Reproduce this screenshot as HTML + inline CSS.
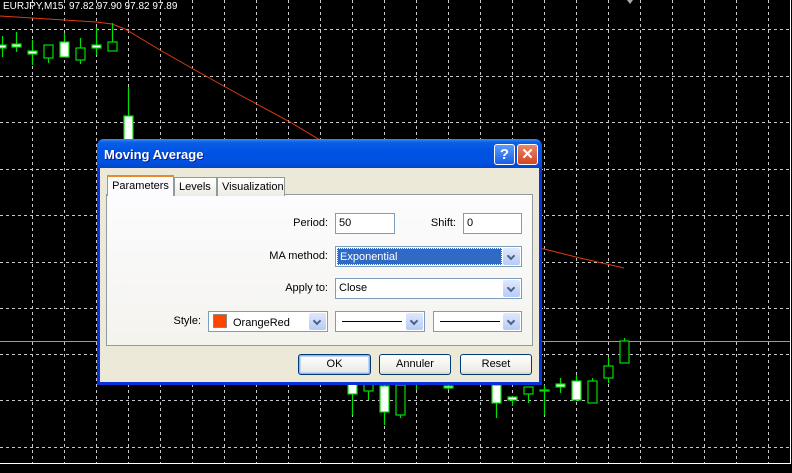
<!DOCTYPE html>
<html><head><meta charset="utf-8"><style>
body{margin:0;width:792px;height:473px;background:#000;overflow:hidden;position:relative;font-family:"Liberation Sans",Tahoma,sans-serif;font-size:11px}
.a{position:absolute}
#dlg{left:97px;top:139px;width:445px;height:246px;background:#0831d9;border-radius:7px 7px 0 0}
#tb{left:0;top:0;width:445px;height:29px;border-radius:7px 7px 0 0;background:linear-gradient(#3c8cf7 0%,#0a5ee6 12%,#0054e3 40%,#0150e0 80%,#0146c8 100%)}
#body{left:3px;top:29px;width:439px;height:214px;background:#ece9d8}
.lbl{position:absolute;text-align:right;color:#000}
.inp{position:absolute;background:#fff;border:1px solid #7f9db9;box-sizing:border-box;height:21px;padding:2px 3px;line-height:15px}
.dd{position:absolute;right:1px;top:1px;width:17px;height:17px;background:linear-gradient(#dfe9fd,#b6cbf6);border-radius:2px}
.dd:after{content:"";position:absolute;left:5px;top:5px;width:4px;height:4px;border-right:2px solid #4d6185;border-bottom:2px solid #4d6185;transform:rotate(45deg)}
.btn{position:absolute;height:21px;box-sizing:border-box;border:1px solid #003c74;border-radius:3px;background:linear-gradient(#fff,#ecebe6 85%,#d6d0c5);text-align:center;line-height:19px}
.tab{position:absolute;height:19px;border:1px solid #919b9c;border-bottom:none;background:linear-gradient(#fff,#ecebe5);line-height:18px;padding:0 4px;box-sizing:border-box}
</style></head><body>
<svg class="a" style="left:0;top:0" width="792" height="473">
<g stroke="#c8c8c8" stroke-width="1" stroke-dasharray="3,3">
<path d="M32.5 0V463M64.5 0V463M96.5 0V463M128.5 0V463M160.5 0V463M192.5 0V463M224.5 0V463M256.5 0V463M288.5 0V463M320.5 0V463M352.5 0V463M384.5 0V463M416.5 0V463M448.5 0V463M480.5 0V463M512.5 0V463M544.5 0V463M576.5 0V463M608.5 0V463M640.5 0V463M672.5 0V463M704.5 0V463M736.5 0V463M768.5 0V463"/>
<path d="M0 29.5H790M0 76.5H790M0 122.5H790M0 169.5H790M0 215.5H790M0 262.5H790M0 308.5H790M0 354.5H790M0 400.5H790M0 447.5H790"/>
</g>
<path d="M0 341.5H790" stroke="#9a9a9a"/>
<path d="M0 463.5H790.5V0" stroke="#fff" fill="none"/>
<path d="M0 16 L32 18 L64 20 L96 22 L112 24 L125 29 L160 50 L195 70 L240 95 L290 122 L320 140 L540 248 L580 258 L624 268" stroke="#e03a10" fill="none"/>
<g stroke="#00e000" stroke-width="1.2">
<path d="M2.5 36V57M16.5 32V52M32.5 40V65M48.5 45V63M64.5 33V42M80.5 38V64M96.5 27V55M112.5 23V42M128.5 87V140M352.5 380V415M368.5 384V400M384.5 380V425M400.5 380V418M416.5 384V390M448.5 384V390M496.5 384V418M512.5 397V406M528.5 387V403M544.5 385V415M560.5 378V393M576.5 375V400M592.5 378V403M608.5 357V383M624.5 338V363"/>
</g>
<g stroke="#00e000" stroke-width="1.2" fill="#fff">
<rect x="-1" y="45" width="7" height="3"/><rect x="12" y="44" width="9" height="3"/><rect x="28" y="51" width="9" height="3"/>
<rect x="44" y="45" width="9" height="13" fill="#000"/><rect x="60" y="42" width="9" height="15"/><rect x="76" y="48" width="9" height="12" fill="#000"/>
<rect x="92" y="45" width="9" height="3"/><rect x="108" y="42" width="9" height="9" fill="#000"/><rect x="124" y="116" width="9" height="24"/>
<rect x="348" y="384" width="9" height="10"/><rect x="364" y="384" width="9" height="7" fill="#000"/><rect x="380" y="386" width="9" height="26"/>
<rect x="396" y="385" width="9" height="30" fill="#000"/><rect x="444" y="386" width="9" height="2"/><rect x="492" y="385" width="9" height="18"/>
<rect x="508" y="397" width="9" height="3"/><rect x="524" y="387" width="9" height="7" fill="#000"/><rect x="540" y="390" width="9" height="1"/>
<rect x="556" y="384" width="9" height="3"/><rect x="572" y="381" width="9" height="19"/><rect x="588" y="381" width="9" height="22" fill="#000"/>
<rect x="604" y="366" width="9" height="12" fill="#000"/><rect x="620" y="341" width="9" height="22" fill="#000"/>
</g>
<path d="M627 0h6l-3 4z" fill="#aaa"/>
<text x="3" y="9" fill="#fff" font-family="Liberation Sans,sans-serif" font-size="10" style="white-space:pre">EURJPY,M15  97.82 97.90 97.82 97.89</text>
</svg>

<div id="dlg" class="a">
<div id="tb" class="a"></div>
<div class="a" style="left:7px;top:8px;color:#fff;font-weight:bold;font-size:13px;text-shadow:1px 1px #0a1e8c">Moving Average</div>
<div class="a" style="left:397px;top:5px;width:19px;height:19px;border:1px solid #fff;border-radius:3px;background:linear-gradient(#5d9cf9,#1b5ee6);color:#fff;font-weight:bold;font-size:15px;text-align:center;line-height:19px">?</div>
<div class="a" style="left:420px;top:5px;width:19px;height:19px;border:1px solid #fff;border-radius:3px;background:linear-gradient(#e8876b,#d2461f);color:#fff;font-weight:bold;font-size:15px;text-align:center;line-height:19px">✕</div>
<div id="body" class="a">
 <div class="a" style="left:6px;top:26px;width:425px;height:150px;border:1px solid #919b9c;background:linear-gradient(#fcfcfe,#f4f3ee)"></div>
 <div class="tab" style="left:7px;top:7px;width:67px;height:21px;border-top:2px solid #e68b2c;background:#fcfcfe;text-align:center">Parameters</div>
 <div class="tab" style="left:74px;top:9px;width:43px">Levels</div>
 <div class="tab" style="left:117px;top:9px;width:68px">Visualization</div>
 <div class="lbl" style="left:150px;width:78px;top:49px">Period:</div>
 <div class="inp" style="left:235px;top:45px;width:60px">50</div>
 <div class="lbl" style="left:300px;width:56px;top:49px">Shift:</div>
 <div class="inp" style="left:363px;top:45px;width:59px">0</div>
 <div class="lbl" style="left:120px;width:108px;top:82px">MA method:</div>
 <div class="inp" style="left:235px;top:78px;width:187px;padding:1px"><div style="background:#316ac5;color:#fff;height:17px;width:165px;line-height:16px;padding-left:2px;border:1px dotted #fff;box-sizing:border-box">Exponential</div><div class="dd"></div></div>
 <div class="lbl" style="left:120px;width:108px;top:114px">Apply to:</div>
 <div class="inp" style="left:235px;top:110px;width:187px">Close<div class="dd"></div></div>
 <div class="lbl" style="left:50px;width:51px;top:147px">Style:</div>
 <div class="inp" style="left:108px;top:143px;width:120px;padding-left:4px"><span style="display:inline-block;width:12px;height:12px;background:#ff4500;border:1px solid #888;vertical-align:-2px;margin-right:6px"></span>OrangeRed<div class="dd"></div></div>
 <div class="inp" style="left:235px;top:143px;width:90px"><div style="position:absolute;left:6px;top:9px;width:60px;border-top:1px solid #000"></div><div class="dd"></div></div>
 <div class="inp" style="left:333px;top:143px;width:89px"><div style="position:absolute;left:6px;top:9px;width:60px;border-top:1px solid #000"></div><div class="dd"></div></div>
 <div class="btn" style="left:198px;top:186px;width:73px;box-shadow:inset 0 0 0 1px #8eb3f0,inset 0 0 0 2px #c3d5fb">OK</div>
 <div class="btn" style="left:279px;top:186px;width:72px">Annuler</div>
 <div class="btn" style="left:360px;top:186px;width:72px">Reset</div>
</div>
</div>
</body></html>
